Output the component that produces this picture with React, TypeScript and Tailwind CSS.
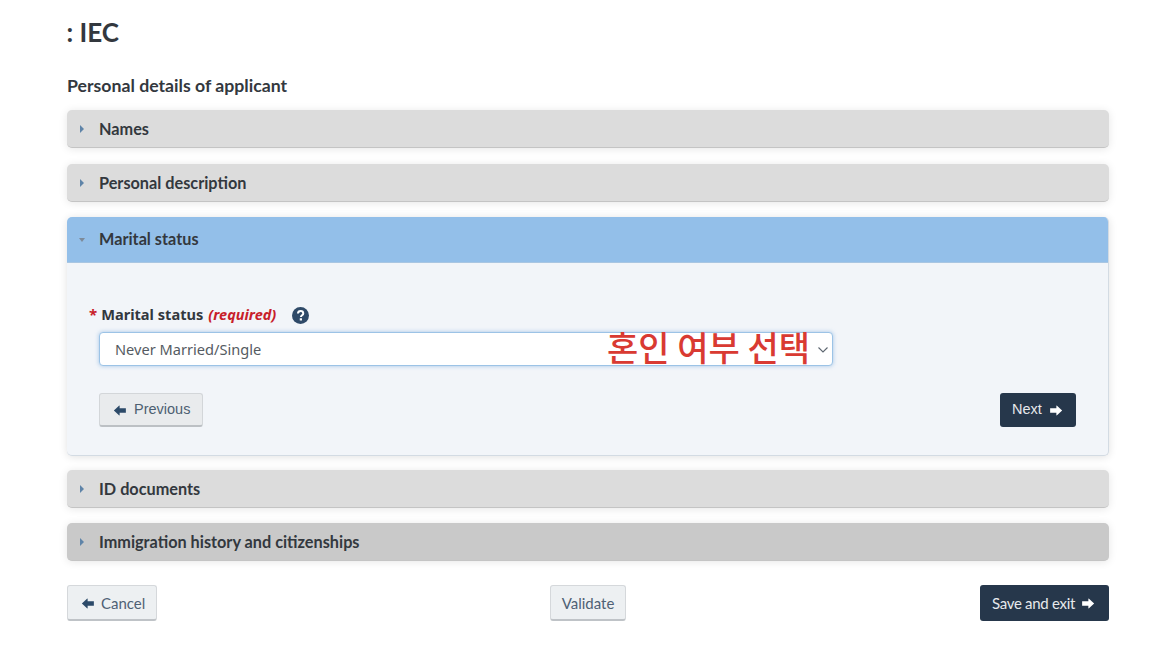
const ArrowIcon = ({ dir, className }: { dir: "left" | "right"; className: string }) => (
  <svg viewBox="0 0 14 12" className={className} fill="currentColor" aria-hidden="true">
    {dir === "left" ? (
      <path d="M0.3 6 L6.2 0.6 L6.6 0.8 V3.6 H13.4 V8.4 H6.6 V11.2 L6.2 11.4 Z" />
    ) : (
      <path d="M13.7 6 L7.8 0.6 L7.4 0.8 V3.6 H0.6 V8.4 H7.4 V11.2 L7.8 11.4 Z" />
    )}
  </svg>
);

const Panel = ({ title, dark }: { title: string; dark?: boolean }) => (
  <div
    className={`h-[38px] rounded-[5px] flex items-center pl-[13px] border-b border-[#c4c4c4] shadow-[0_1px_8px_rgba(0,0,0,0.10)] ${
      dark ? "bg-[#c9c9c9]" : "bg-[#dcdcdc]"
    }`}
  >
    <svg viewBox="0 0 4 8" className="w-[4px] h-[8px] text-[#5f84a8]" fill="currentColor">
      <path d="M0 0 L4 4 L0 8 Z" />
    </svg>
    <span className="ml-[15px] pt-[1px] text-[16.25px] font-bold text-[#33383e] leading-none">{title}</span>
  </div>
);

export default function App() {
  return (
    <div className="w-[1155px] h-[650px] bg-white overflow-hidden font-['Lato',sans-serif] pl-[67px] pr-[46px] pt-[15px]">
      <h1 className="-ml-[0.5px] text-[26px] font-bold text-[#33383e] leading-[34px]">: IEC</h1>
      <h2 className="mt-[26px] text-[17.7px] font-bold text-[#33383e] leading-[22px]">Personal details of applicant</h2>

      <div className="mt-[13px] flex flex-col">
        <Panel title="Names" />
        <div className="mt-[16px]">
          <Panel title="Personal description" />
        </div>

        <div className="mt-[15px] h-[239px] rounded-[5px] border-b border-r border-[#d3dbe3] shadow-[0_1px_8px_rgba(0,0,0,0.12)] bg-[#f2f5f9] flex flex-col overflow-hidden">
          <div className="h-[46px] shrink-0 bg-[#93bfe9] flex items-center pl-[12px] border-b border-[#a9c6e2]">
            <svg viewBox="0 0 6 4" className="w-[6px] h-[4px] text-[#7d8a99]" fill="currentColor">
              <path d="M0 0 H6 L3 4 Z" />
            </svg>
            <span className="ml-[14px] pb-[1px] text-[16.25px] font-bold text-[#33383e] leading-none">Marital status</span>
          </div>

          <div className="flex-1 pl-[32px] pr-[32px] flex flex-col">
            <div className="mt-[40px] -ml-[10px] flex items-center h-[22px]">
              <span className="text-[15px] font-bold text-[#c8202a] mr-[4px] font-['Noto_Sans',sans-serif] leading-none">*</span>
              <span className="text-[14.6px] font-bold text-[#33383e] font-['Noto_Sans',sans-serif] leading-none">Marital status</span>
              <span className="ml-[5px] text-[14.5px] font-bold italic text-[#c8202a] font-['Noto_Sans',sans-serif] leading-none">(required)</span>
              <svg viewBox="0 0 16 16" className="ml-[16px] w-[17px] h-[17px] mt-[2px]">
                <circle cx="8" cy="8" r="8" fill="#2f4a68" />
                <path d="M5.6 6.1 C5.7 4.6 6.8 3.8 8.1 3.8 C9.5 3.8 10.6 4.7 10.6 6 C10.6 7.9 8.4 7.7 8.4 9.4" fill="none" stroke="#fff" strokeWidth="1.9" />
                <rect x="7.3" y="10.6" width="2.1" height="2.1" fill="#fff" />
              </svg>
            </div>

            <div className="relative mt-[7px] w-[734px] h-[34px] bg-white rounded-[4px] border border-[#9cc3e6] shadow-[0_0_4px_rgba(110,165,220,0.6)] flex items-center pl-[15px] pt-[1px]">
              <span className="text-[14.6px] text-[#555b62] font-['Noto_Sans',sans-serif]">Never Married/Single</span>
              <svg viewBox="0 0 10 6" className="absolute right-[4px] top-[14px] w-[10px] h-[6px]" fill="none" stroke="#5d6670" strokeWidth="1.1">
                <path d="M0.5 0.5 L5 5 L9.5 0.5" />
              </svg>
              <span className="absolute left-[507px] -top-[5px] text-[34px] font-medium leading-[38px] text-[#d93a32] whitespace-nowrap font-['Noto_Sans_CJK_KR',sans-serif]">혼인 여부 선택</span>
            </div>

            <div className="mt-[27px] flex justify-between items-start">
              <button className="h-[34px] w-[104px] rounded-[3px] bg-[#e9ebed] border border-[#d3d6d9] border-b-2 border-b-[#bcc0c4] flex items-center pl-[13px] pt-[1px] text-[14.5px] text-[#4d5f72] font-['Liberation_Sans',sans-serif]">
                <ArrowIcon dir="left" className="w-[14px] h-[11px] text-[#2c4a69]" />
                <span className="ml-[7px]">Previous</span>
              </button>
              <button className="h-[34px] w-[76px] rounded-[3px] bg-[#26374b] flex items-center pl-[12px] text-[14.5px] text-[#e6e9ec] font-['Liberation_Sans',sans-serif]">
                <span>Next</span>
                <ArrowIcon dir="right" className="ml-[7px] w-[14px] h-[11px] text-white" />
              </button>
            </div>
          </div>
        </div>

        <div className="mt-[14px]">
          <Panel title="ID documents" />
        </div>
        <div className="mt-[15px]">
          <Panel title="Immigration history and citizenships" dark />
        </div>

        <div className="mt-[24px] flex items-start">
          <button className="h-[36px] w-[90px] rounded-[3px] bg-[#edf0f2] border border-[#d5d8db] border-b-2 border-b-[#bfc3c7] flex items-center pl-[13px] pt-[1px] text-[15px] text-[#4f6175]">
            <ArrowIcon dir="left" className="w-[14px] h-[11px] text-[#2c4a69]" />
            <span className="ml-[6px]">Cancel</span>
          </button>
          <button className="ml-[393px] h-[36px] w-[76px] rounded-[3px] bg-[#edf0f2] border border-[#d5d8db] border-b-2 border-b-[#bfc3c7] flex items-center justify-center pt-[1px] text-[15px] text-[#4f6175]">
            Validate
          </button>
          <button className="ml-auto h-[36px] w-[129px] rounded-[3px] bg-[#26374b] flex items-center pl-[12px] text-[15px] tracking-[-0.3px] text-[#e6e9ec]">
            <span>Save and exit</span>
            <ArrowIcon dir="right" className="ml-[6px] w-[14px] h-[11px] text-white" />
          </button>
        </div>
      </div>
    </div>
  );
}
